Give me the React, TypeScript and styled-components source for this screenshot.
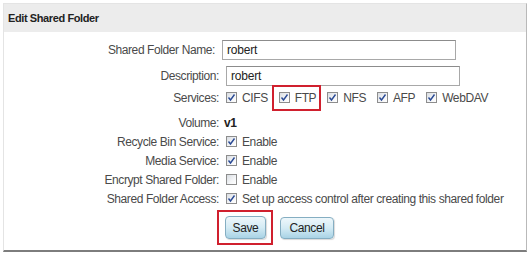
import React from "react";
import styled, { createGlobalStyle } from "styled-components";

const GlobalStyle = createGlobalStyle`
  html, body { margin: 0; padding: 0; background: #ffffff; }
  body { font-family: "Liberation Sans", Arial, sans-serif; font-size: 12px; letter-spacing: -0.4px; color: #4a4a4a; }
`;

const Page = styled.div`
  padding: 3px 0 0 3px;
`;

const Panel = styled.div`
  box-sizing: border-box;
  width: 524px;
  height: 249px;
  border: 1px solid #e4e4e4;
  border-right: 1px solid #b9b9b9;
  border-bottom: 2px solid #7d7d7d;
  background: #fff;
  display: flex;
  flex-direction: column;
`;

const Header = styled.div`
  height: 28px;
  background: #ececec;
  display: flex;
  align-items: center;
  padding-left: 4px;
  font-weight: bold;
  font-size: 11px;
  letter-spacing: -0.4px;
  color: #222;
`;

const Form = styled.div`
  display: flex;
  flex-direction: column;
  padding-top: 8px;
`;

const Row = styled.div<{ $h: number; $mt?: number }>`
  display: grid;
  grid-template-columns: 215px 1fr;
  column-gap: 7px;
  align-items: center;
  height: ${(p) => p.$h}px;
  margin-top: ${(p) => p.$mt ?? 0}px;
`;

const Label = styled.div<{ $shift?: number }>`
  text-align: right;
  color: #4a4a4a;
  white-space: nowrap;
  margin-right: ${(p) => p.$shift ?? 0}px;
`;

const Value = styled.div`
  display: flex;
  align-items: center;
  white-space: nowrap;
  color: #4a4a4a;
`;

const TextInput = styled.div<{ $shift?: number }>`
  box-sizing: border-box;
  width: 234px;
  height: 20px;
  border: 1px solid #a8a8a8;
  border-top-color: #8c8c8c;
  margin-left: ${(p) => p.$shift ?? 0}px;
  padding-left: 4px;
  display: flex;
  align-items: center;
  color: #222;
  font-size: 12px;
  letter-spacing: -0.2px;
`;

const Strong = styled.span`
  font-weight: bold;
  color: #222;
  font-size: 12px;
  margin-left: -2px;
`;

const ServiceList = styled.div`
  display: flex;
  align-items: center;
  gap: 11px;
`;

const Option = styled.label<{ $ring?: boolean }>`
  position: relative;
  display: inline-flex;
  align-items: center;
  gap: 5px;
  color: #4a4a4a;
  ${(p) =>
    p.$ring
      ? `&::after {
      content: "";
      position: absolute;
      left: -7px;
      right: -5px;
      top: -6px;
      bottom: -6px;
      border: 2px solid #d0202e;
    }`
      : ""}
`;

const Box = styled.span`
  box-sizing: border-box;
  width: 11px;
  height: 11px;
  border: 1px solid #8d8d8d;
  background: linear-gradient(135deg, #d9dde2 0%, #f4f5f7 60%, #ffffff 100%);
  display: inline-flex;
  align-items: center;
  justify-content: center;
`;

const ButtonRow = styled.div`
  display: flex;
  align-items: center;
  gap: 14px;
  margin-top: 8px;
  padding-left: 221px;
`;

const Ring = styled.div`
  position: relative;
  display: inline-flex;
  &::after {
    content: "";
    position: absolute;
    left: -8px;
    right: -7px;
    top: -6px;
    bottom: -6px;
    border: 2px solid #d0202e;
  }
`;

const Button = styled.button<{ $w: number; $h: number }>`
  box-sizing: border-box;
  width: ${(p) => p.$w}px;
  height: ${(p) => p.$h}px;
  border: 1px solid #85aec2;
  border-radius: 4px;
  background: linear-gradient(to bottom, #eef7fb 0%, #d4ebf4 50%, #a9d3e5 100%);
  font-family: "Liberation Sans", Arial, sans-serif;
  font-size: 12px;
  letter-spacing: -0.4px;
  color: #222;
  padding: 0;
  box-shadow: 1px 1px 1px rgba(0, 0, 0, 0.15);
`;

const Check = ({ on = true }: { on?: boolean }) => (
  <Box>
    {on && (
      <svg width="9" height="9" viewBox="0 0 9 9">
        <path d="M1.5 4.5 L3.5 7 L7.5 1.5" fill="none" stroke="#2a4a95" strokeWidth="1.4" />
      </svg>
    )}
  </Box>
);

export default function App() {
  return (
    <>
      <GlobalStyle />
      <Page>
        <Panel>
          <Header>Edit Shared Folder</Header>
          <Form>
            <Row $h={20}>
              <Label $shift={4}>Shared Folder Name:</Label>
              <Value>
                <TextInput $shift={-4}>robert</TextInput>
              </Value>
            </Row>
            <Row $h={20} $mt={6}>
              <Label>Description:</Label>
              <Value>
                <TextInput>robert</TextInput>
              </Value>
            </Row>
            <Row $h={19} $mt={2}>
              <Label>Services:</Label>
              <Value>
                <ServiceList>
                  <Option>
                    <Check />
                    CIFS
                  </Option>
                  <Option $ring>
                    <Check />
                    FTP
                  </Option>
                  <Option>
                    <Check />
                    NFS
                  </Option>
                  <Option>
                    <Check />
                    AFP
                  </Option>
                  <Option>
                    <Check />
                    WebDAV
                  </Option>
                </ServiceList>
              </Value>
            </Row>
            <Row $h={19} $mt={6}>
              <Label>Volume:</Label>
              <Value>
                <Strong>v1</Strong>
              </Value>
            </Row>
            <Row $h={19}>
              <Label>Recycle Bin Service:</Label>
              <Value>
                <Option>
                  <Check />
                  Enable
                </Option>
              </Value>
            </Row>
            <Row $h={19}>
              <Label>Media Service:</Label>
              <Value>
                <Option>
                  <Check />
                  Enable
                </Option>
              </Value>
            </Row>
            <Row $h={19}>
              <Label>Encrypt Shared Folder:</Label>
              <Value>
                <Option>
                  <Check on={false} />
                  Enable
                </Option>
              </Value>
            </Row>
            <Row $h={19}>
              <Label>Shared Folder Access:</Label>
              <Value>
                <Option>
                  <Check />
                  Set up access control after creating this shared folder
                </Option>
              </Value>
            </Row>
            <ButtonRow>
              <Ring>
                <Button $w={41} $h={23}>Save</Button>
              </Ring>
              <Button $w={54} $h={22}>Cancel</Button>
            </ButtonRow>
          </Form>
        </Panel>
      </Page>
    </>
  );
}
